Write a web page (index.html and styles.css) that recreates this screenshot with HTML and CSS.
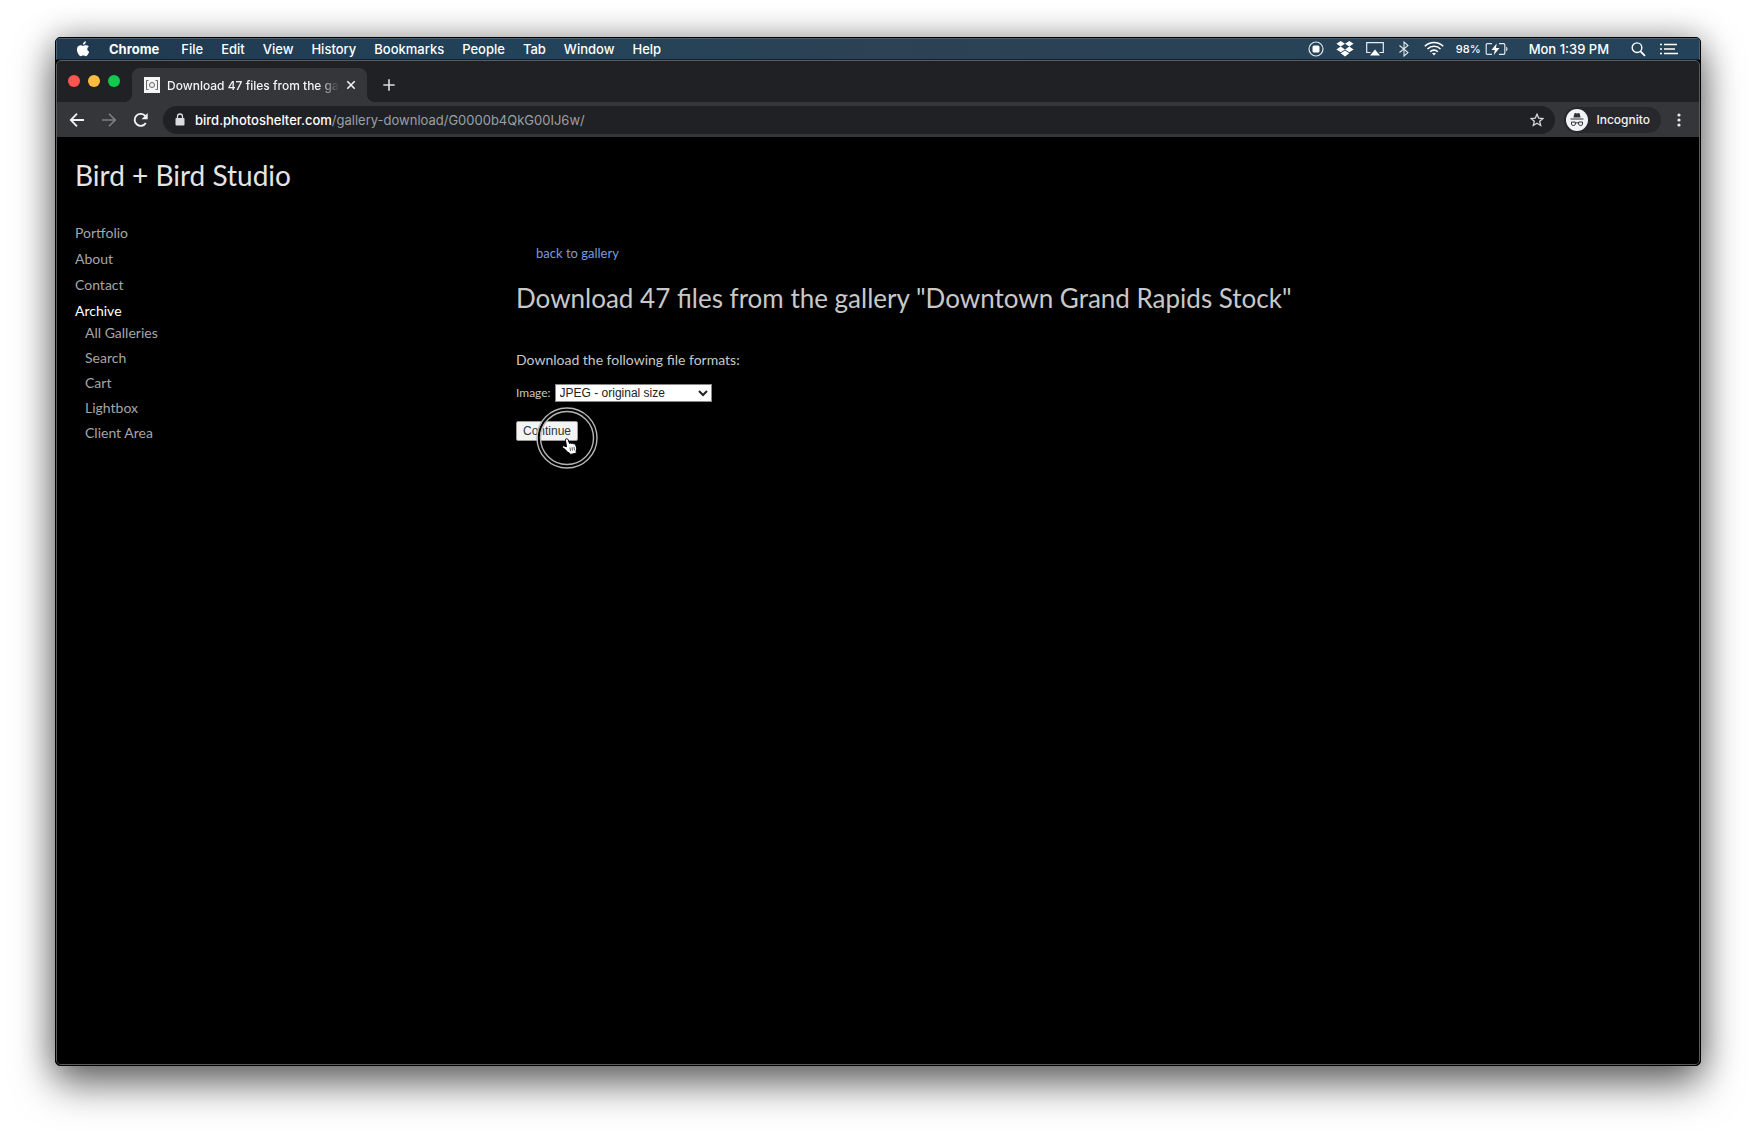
FILE: index.html
```html
<!DOCTYPE html>
<html lang="en">
<head>
<meta charset="utf-8">
<title>Download 47 files from the gallery</title>
<link rel="stylesheet" href="styles.css">
</head>
<body>
<div class="screen">
  <header class="menubar">
    <svg class="apple" width="14" height="16" viewBox="0 0 14 16" fill="#fff"><path d="M9.900.3c.1 1-.3 1.800-.8 2.400-.6.7-1.400 1.100-2.200 1.100-.1-.9.3-1.800.8-2.400C8.300.800 9.200.4 9.900.3zM12.900 5.500c-1 .6-1.600 1.500-1.600 2.600 0 1.300.8 2.300 1.900 2.700-.3.9-.7 1.700-1.200 2.500-.6.9-1.200 1.900-2.200 1.900s-1.300-.6-2.500-.6-1.600.6-2.500.6c-1 0-1.700-1-2.300-1.900C1.200 11.500.4 8.700 1.300 6.600 1.900 5.200 3.100 4.300 4.400 4.300c1 0 1.900.7 2.500.7.600 0 1.700-.8 3-.7 1.100 0 2.300.4 3 1.200z"/></svg>
    <nav class="menus">
      <button class="app-name">Chrome</button>
      <button>File</button>
      <button>Edit</button>
      <button>View</button>
      <button>History</button>
      <button>Bookmarks</button>
      <button>People</button>
      <button>Tab</button>
      <button>Window</button>
      <button>Help</button>
    </nav>
    <div class="status">
      <svg width="16" height="16" viewBox="0 0 16 16"><circle cx="8" cy="8" r="7" fill="none" stroke="#dfe6ea" stroke-width="1.200"/><rect x="4.500" y="4.500" width="7" height="7" rx="1.500" fill="#fff"/></svg>
      <svg width="18" height="16" viewBox="0 0 18 16" fill="#fff"><path d="M4.700 0 9 2.800 4.700 5.600.4 2.800zM13.300 0l4.300 2.800-4.300 2.800L9 2.800zM.4 8.400l4.300-2.800L9 8.400l-4.300 2.800zM13.300 5.600l4.300 2.800-4.300 2.800L9 8.400zM4.700 12.200 9 9.400l4.300 2.800L9 15.500z"/></svg>
      <svg width="18" height="16" viewBox="0 0 18 16"><path d="M4.500 11.500H.7V1.700h16.600v9.800h-3.800" fill="none" stroke="#e6ecf0" stroke-width="1.200"/><path d="M9 8.500l5 6H4z" fill="#fff"/></svg>
      <svg class="bluetooth" width="10" height="16" viewBox="0 0 10 16"><path d="M.5 4.500l8.500 7L5 15V1l4 3.500-8.500 7" fill="none" stroke="#dfe6ea" stroke-width="1.100"/></svg>
      <svg width="20" height="16" viewBox="0 0 20 16" fill="none" stroke="#fff" stroke-width="1.600"><path d="M.8 5.300a13 13 0 0 1 18.400 0M3.500 8a9.200 9.200 0 0 1 13 0M6.200 10.700a5.400 5.400 0 0 1 7.600 0"/><path d="M8 12.300q2-1.300 4 0l-2 2.200z" fill="#fff" stroke="none"/></svg>
      <span class="battery">98%
        <svg width="24" height="14" viewBox="0 0 24 14"><path d="M7 1.700H2.200q-1 0-1 1v8.600q0 1 1 1H7M14 1.700h4.800q1 0 1 1v8.600q0 1-1 1H14" fill="none" stroke="#dfe6ea" stroke-width="1.200"/><path d="M11.700 1.500 6.500 8h3.300l-1 5L14.500 6H11z" fill="#fff"/><path d="M21.500 5q1.500 2 0 4z" fill="#dfe6ea" stroke="#dfe6ea" stroke-width=".6"/></svg>
      </span>
      <span class="clock">Mon 1:39 PM</span>
      <svg width="15" height="16" viewBox="0 0 15 16" fill="none" stroke="#fff" stroke-width="1.400"><circle cx="6" cy="6.700" r="4.800"/><path d="M9.500 10.300l4.500 4.500" stroke-width="1.800"/></svg>
      <svg class="list" width="18" height="12" viewBox="0 0 18 12" stroke="#fff" stroke-width="1.600"><path d="M0 1.500h2M0 6h2M0 10.500h2M4 1.500h13M4 6h11M4 10.500h14"/></svg>
    </div>
  </header>

  <section class="browser">
    <div class="tabstrip">
      <div class="lights"><i class="red"></i><i class="yellow"></i><i class="green"></i></div>
      <div class="tab">
        <svg width="16" height="16" viewBox="0 0 16 16" fill="none" stroke="#666" stroke-width="1"><rect width="16" height="16" fill="#f5f5f5" stroke="none"/><path d="M4.500 3.500h-2v9h2M11.500 3.500h2v9h-2"/><circle cx="8" cy="8" r="2.500"/></svg>
        <span class="tab-title">Download 47 files from the gallery</span>
        <button class="icon" aria-label="Close tab"><svg width="10" height="10" viewBox="0 0 10 10" stroke="#f1f3f4" stroke-width="1.600"><path d="M1.300 1.300l7.400 7.400M8.700 1.300L1.300 8.700"/></svg></button>
      </div>
      <button class="icon new-tab" aria-label="New tab"><svg width="12" height="12" viewBox="0 0 12 12" stroke="#dadce0" stroke-width="1.600"><path d="M6 .3v11.400M.3 6h11.400"/></svg></button>
    </div>
    <div class="toolbar">
      <button class="icon" aria-label="Back"><svg width="16" height="16" viewBox="0 0 16 16" fill="none" stroke="#f1f3f4" stroke-width="1.800"><path d="M15 8H2M8 1.700L1.800 8 8 14.300"/></svg></button>
      <button class="icon" aria-label="Forward"><svg width="16" height="16" viewBox="0 0 16 16" fill="none" stroke="#7f8084" stroke-width="1.600"><path d="M1 8h13M8 1.700L14.200 8 8 14.300"/></svg></button>
      <button class="icon" aria-label="Reload"><svg width="16" height="16" viewBox="0 0 16 16"><path d="M12.800 11a6 6 0 1 1-.4-6.800" fill="none" stroke="#f1f3f4" stroke-width="1.900"/><path d="M14.700 1v6.200H8.500z" fill="#f1f3f4"/></svg></button>
      <div class="omnibox">
        <svg width="10" height="13" viewBox="0 0 10 13"><path d="M2.500 6V3.500a2.500 2.500 0 0 1 5 0V6" fill="none" stroke="#dadce0" stroke-width="1.300"/><rect x=".5" y="5" width="9" height="7.500" rx="1" fill="#dadce0"/></svg>
        <span class="url"><b>bird.photoshelter.com</b>/gallery-download/G0000b4QkG00IJ6w/</span>
        <button class="icon" aria-label="Bookmark"><svg width="14" height="14" viewBox="0 0 14 14"><path d="M7 1.200l1.700 3.900 4.200.4-3.200 2.800 1 4.200L7 10.300l-3.700 2.200 1-4.200L1.100 5.500l4.200-.4z" fill="none" stroke="#d5d6d9" stroke-width="1.300"/></svg></button>
      </div>
      <div class="profile">
        <svg width="22" height="22" viewBox="0 0 22 22"><circle cx="11" cy="11" r="11" fill="#f1f3f4"/><path d="M7.400 8.500l1-4q.2-.6.900-.4l1.700.5 1.700-.5q.7-.2.900.4l1 4zM4.500 9.500h13v1h-13z" fill="#303134"/><path d="M5.500 13h3.800v2.200q0 1.300-1.900 1.300t-1.900-1.300zM12.700 13h3.800v2.200q0 1.300-1.900 1.300t-1.900-1.300zM9.300 14.200q1.700-1 3.400 0" fill="none" stroke="#303134" stroke-width="1"/></svg>
        Incognito
      </div>
      <button class="icon" aria-label="More"><svg width="4" height="14" viewBox="0 0 4 14" fill="#e8eaed"><circle cx="2" cy="2" r="1.600"/><circle cx="2" cy="7" r="1.600"/><circle cx="2" cy="12" r="1.600"/></svg></button>
    </div>

    <div class="page">
      <aside class="sidebar">
        <h1>Bird + Bird Studio</h1>
        <ul class="nav">
          <li><a href="#">Portfolio</a></li>
          <li><a href="#">About</a></li>
          <li><a href="#">Contact</a></li>
          <li><a class="current" href="#">Archive</a></li>
        </ul>
        <ul class="nav subnav">
          <li><a href="#">All Galleries</a></li>
          <li><a href="#">Search</a></li>
          <li><a href="#">Cart</a></li>
          <li><a href="#">Lightbox</a></li>
          <li><a href="#">Client Area</a></li>
        </ul>
      </aside>
      <main class="content">
        <a class="back" href="#">back to gallery</a>
        <h2>Download 47 files from the gallery "Downtown Grand Rapids Stock"</h2>
        <p>Download the following file formats:</p>
        <div class="field">
          <label for="format">Image:</label>
          <select id="format"><option>JPEG - original size</option></select>
        </div>
        <div class="action">
          <button class="continue">Continue</button>
          <svg class="pointer" width="62" height="62" viewBox="0 0 62 62"><circle cx="31" cy="31" r="28.200" fill="none" stroke="#000" stroke-width="2.200"/><g fill="none" stroke="#b4b4b4" stroke-width="1.400"><circle cx="31" cy="31" r="30"/><circle cx="31" cy="31" r="26.500"/></g><path d="M29.500 33.500q-.3-1.600 1-1.800 1.200-.1 1.700 1.200l1.300 3.600q1-.9 2.100.1 1-.8 2.200.3 1.400-.4 1.900 1l1 3.300-.6 3.400.3 1.600-5.800 1.200-1-1.200q-2.800-1-4.300-3.600l-2.800-2q-.7-1.700 1-1.800l3 1z" fill="#fff" stroke="#000" stroke-width="1"/><path d="M34 40.500l.5 3.500M36 40.200l.5 3.500M38 39.800l.5 3.500" stroke="#333" stroke-width=".8"/></svg>
        </div>
      </main>
    </div>
  </section>
</div>
</body>
</html>
```
FILE: styles.css
```css
* { box-sizing: border-box; }

body {
  margin: 0;
  min-height: 100vh;
  padding: 37px 55px 73px;
  display: flex;
  background: #fff;
  font-family: Inter, "Liberation Sans", sans-serif;
  font-size: 13px;
}

h1, h2, p, ul { margin: 0; padding: 0; font-weight: 400; }
ul { list-style: none; }
a { color: inherit; text-decoration: none; }
svg { display: block; flex: none; }
button { font: inherit; color: inherit; }

.screen {
  flex: 1;
  display: flex;
  flex-direction: column;
  border: 1px solid #000;
  border-radius: 5px;
  overflow: hidden;
  background: #000;
  box-shadow: 0 18px 40px rgba(0, 0, 0, .55), 0 0 32px rgba(0, 0, 0, .3);
}

/* macOS menu bar */
.menubar {
  height: 22px;
  display: flex;
  align-items: center;
  padding: 0 21px 0 19px;
  background: linear-gradient(90deg, #20394f, #22435a 30%, #2d4254 50%, #24435a);
  border: 1px solid #4a6073;
  border-bottom-color: #10202e;
  color: #fff;
  font-weight: 500;
}

.menus { display: flex; gap: 18px; margin-left: 19px; }
.menus button, .icon { padding: 0; border: 0; background: none; }
.menus .app-name { margin-right: 4px; font-weight: 700; }

.status { margin-left: auto; display: flex; align-items: center; gap: 12px; }
.bluetooth { margin: 0 3px; }
.battery { display: flex; align-items: center; gap: 4px; font-size: 11px; }
.clock { margin: 0 10px 0 8px; }
.list { margin-left: 2px; }

/* Browser window */
.browser {
  flex: 1;
  display: flex;
  flex-direction: column;
  border: 1px solid #5a5b5e;
  border-radius: 5px;
  overflow: hidden;
  background: #202124;
}

.tabstrip { height: 41px; display: flex; padding-left: 11px; color: #f1f3f4; }
.lights { display: flex; gap: 8px; margin: 14px 12px 0 0; }
.lights i { width: 12px; height: 12px; border-radius: 50%; }
.red { background: #ff5450; }
.yellow { background: #fdbc40; }
.green { background: #0ecb50; }

.tab {
  position: relative;
  width: 235px;
  margin-top: 7px;
  padding: 0 11px 0 12px;
  display: flex;
  align-items: center;
  gap: 7px;
  background: #35363a;
  border-radius: 8px 8px 0 0;
  font-size: 12px;
  font-weight: 500;
}
.tab::before, .tab::after {
  content: "";
  position: absolute;
  bottom: 0;
  width: 8px;
  height: 8px;
}
.tab::before { left: -8px; background: radial-gradient(circle at 0 0, transparent 8px, #35363a 8px); }
.tab::after { right: -8px; background: radial-gradient(circle at 100% 0, transparent 8px, #35363a 8px); }
.tab-title {
  flex: 1;
  overflow: hidden;
  white-space: nowrap;
  mask-image: linear-gradient(90deg, #000 88%, transparent);
}
.new-tab { margin: 7px 0 0 16px; }

.toolbar {
  height: 35px;
  display: flex;
  align-items: center;
  gap: 16px;
  padding: 0 18px 0 12px;
  background: #35363a;
  color: #f1f3f4;
}
.omnibox {
  flex: 1;
  height: 28px;
  display: flex;
  align-items: center;
  gap: 10px;
  padding: 0 11px 0 12px;
  margin-right: -7px;
  margin-left: -2px;
  background: #202124;
  border-radius: 14px;
}
.url { flex: 1; color: #9aa0a6; }
.url b { color: #fff; font-weight: 500; }
.profile {
  height: 26px;
  display: flex;
  align-items: center;
  gap: 8px;
  padding: 0 11px 0 2px;
  background: #28282c;
  border-radius: 13px;
  font-size: 12px;
  font-weight: 500;
}

/* Gallery download page */
.page {
  flex: 1;
  display: grid;
  grid-template-columns: 441px 1fr;
  padding: 20px 18px;
  background: #000;
  color: #c8c8c8;
  font-family: Lato, "Liberation Sans", sans-serif;
}
h1 { font-size: 28px; line-height: 36px; color: #e4e4e4; }
.nav { margin-top: 27px; font-size: 14px; line-height: 26px; color: #a6a6a6; }
.nav + .subnav { margin: -4px 0 0 10px; line-height: 25px; }
.current { color: #fff; }

.content { padding-top: 86px; }
.back { display: block; margin-left: 20px; font-size: 13px; line-height: 20px; color: #7c9cdc; }
h2 { margin-top: 17px; font-size: 26px; line-height: 36px; }
p { margin-top: 34px; font-size: 14px; line-height: 20px; }
.field { display: flex; align-items: center; gap: 4px; margin-top: 14px; font-size: 12px; line-height: 18px; }
.field select {
  width: 157px;
  height: 18px;
  padding: 0;
  border: 1px solid #888;
  border-radius: 0;
  background: #fff;
  color: #222;
  font: 12px "Liberation Sans", sans-serif;
}
.action { position: relative; margin-top: 19px; }
.continue {
  display: block;
  height: 20px;
  padding: 0 6px;
  border: 1px solid #999;
  border-radius: 2px;
  background: #f4f4f4;
  color: #333;
  font: 12px "Liberation Sans", sans-serif;
}
.pointer { position: absolute; left: 20px; top: -14px; }
```
